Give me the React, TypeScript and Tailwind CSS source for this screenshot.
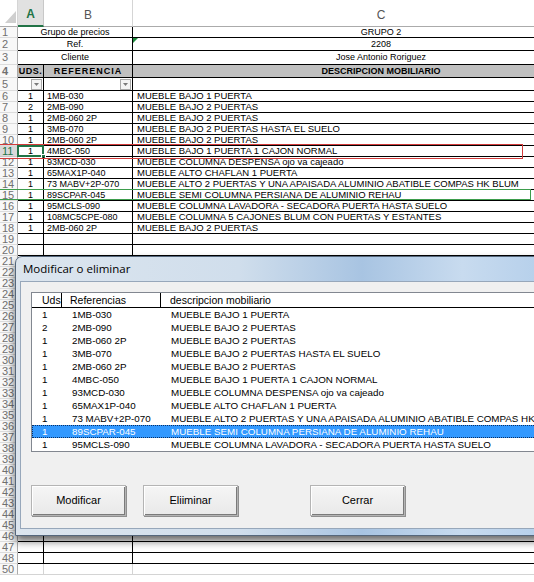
import clsx from "clsx";
import type { ReactNode } from "react";

const sheetRows: [string, string, string][] = [
  ["1", "1MB-030", "MUEBLE BAJO 1 PUERTA"],
  ["2", "2MB-090", "MUEBLE BAJO 2 PUERTAS"],
  ["1", "2MB-060 2P", "MUEBLE BAJO 2 PUERTAS"],
  ["1", "3MB-070", "MUEBLE BAJO 2 PUERTAS HASTA EL SUELO"],
  ["1", "2MB-060 2P", "MUEBLE BAJO 2 PUERTAS"],
  ["1", "4MBC-050", "MUEBLE BAJO 1 PUERTA 1 CAJON NORMAL"],
  ["1", "93MCD-030", "MUEBLE COLUMNA DESPENSA ojo va cajeado"],
  ["1", "65MAX1P-040", "MUEBLE ALTO CHAFLAN 1 PUERTA"],
  ["1", "73 MABV+2P-070", "MUEBLE ALTO 2 PUERTAS Y UNA APAISADA ALUMINIO ABATIBLE COMPAS HK BLUM"],
  ["1", "89SCPAR-045", "MUEBLE SEMI COLUMNA PERSIANA DE ALUMINIO REHAU"],
  ["1", "95MCLS-090", "MUEBLE COLUMNA LAVADORA - SECADORA PUERTA HASTA SUELO"],
  ["1", "108MC5CPE-080", "MUEBLE COLUMNA 5 CAJONES BLUM CON PUERTAS Y ESTANTES"],
  ["1", "2MB-060 2P", "MUEBLE BAJO 2 PUERTAS"],
];

const listRows = sheetRows.slice(0, 11);

function RowHead({ n, active }: { n: number; active?: boolean }) {
  return (
    <div
      className={clsx(
        "flex w-[18px] shrink-0 items-center overflow-hidden border-r border-b pl-[2px] text-[11px] leading-none",
        active
          ? "border-r-[#217346] border-b-[#c6c6c6] bg-[#d9d9d9] text-[#217346]"
          : "border-r-[#ababab] border-b-[#dcdcdc] bg-[#f8f8f8] text-[#707070]"
      )}
    >
      {n}
    </div>
  );
}

type RowProps = {
  n: number;
  tall?: boolean;
  a?: ReactNode;
  b?: ReactNode;
  c?: ReactNode;
  plain?: boolean;
  lightBottom?: boolean;
  active?: boolean;
};

function SheetRow({ n, tall, a, b, c, plain, lightBottom, active }: RowProps) {
  const v = plain ? "border-r-[#d4d4d4]" : "border-r-black";
  const hb = plain || lightBottom ? "border-b-[#d4d4d4]" : "border-b-black";
  return (
    <div className={clsx("flex text-[9px] leading-none", tall ? "h-[13px]" : "h-[11px]")}>
      <RowHead n={n} active={active} />
      <div className={clsx("relative flex w-[26px] shrink-0 items-center justify-center border-r border-b", v, hb)}>
        {a}
        {active && (
          <>
            <div className="absolute -inset-[1px] border-2 border-[#217346]" />
            <div className="absolute -right-[3px] -bottom-[3px] h-[5px] w-[5px] border border-white bg-[#217346]" />
          </>
        )}
      </div>
      <div className={clsx("flex w-[89px] shrink-0 items-center whitespace-nowrap border-r border-b pl-[3px]", v, hb)}>
        {b}
      </div>
      <div className={clsx("flex w-[496px] shrink-0 items-center whitespace-nowrap border-b pl-[4px] text-[9.5px]", hb)}>
        {c}
      </div>
    </div>
  );
}

function FilterButton() {
  return (
    <div className="flex h-[11px] w-[11px] items-center justify-center border border-[#a9a9a9] bg-[#f4f4f4]">
      <svg width="5" height="3" viewBox="0 0 5 3">
        <polygon points="0,0 5,0 2.5,3" fill="#7a7a7a" />
      </svg>
    </div>
  );
}

function WinButton({ label }: { label: string }) {
  return (
    <button className="h-[31px] w-[95px] border border-[#b4b4b4] bg-[linear-gradient(#f5f5f5,#e9e9e9)] text-[11px] text-black shadow-[inset_1px_1px_#fff,inset_-1px_-1px_#7a7a7a,1px_1px_#8f8f8f]">
      {label}
    </button>
  );
}

export default function App() {
  const hidden = Array.from({ length: 28 }, (_, i) => 21 + i);
  return (
    <div className="relative h-[582px] w-[534px] overflow-hidden bg-white font-['Liberation_Sans',Arial,sans-serif] text-black">
      <div className="w-[640px]">
        {/* column letters */}
        <div className="flex h-[27px] text-[12px] leading-none text-[#555]">
          <div className="relative w-[18px] shrink-0 border-r border-b border-r-[#d5d5d5] border-b-[#ababab]">
            <svg className="absolute left-[5px] top-[11px]" width="11" height="12" viewBox="0 0 11 12">
              <polygon points="11,0 11,12 0,12" fill="#cfcfcf" />
            </svg>
          </div>
          <div className="flex w-[26px] shrink-0 items-center justify-center border-r border-b-2 border-r-[#c8c8c8] border-b-[#217346] bg-[#e1e1e1] pt-[2px] font-bold text-[#217346]">
            A
          </div>
          <div className="flex w-[89px] shrink-0 items-center justify-center border-r border-b border-r-[#d5d5d5] border-b-[#ababab] pt-[3px]">
            B
          </div>
          <div className="flex w-[496px] shrink-0 items-center justify-center border-b border-b-[#ababab] pt-[3px]">C</div>
        </div>

        {/* rows 1-3, merged A:B */}
        {[
          ["Grupo de precios", "GRUPO 2", "h-[11px]"],
          ["Ref.", "2208", "h-[13px]"],
          ["Cliente", "Jose Antonio Roriguez", "h-[14px]"],
        ].map(([label, value, h], i) => (
          <div key={label} className={clsx("flex text-[9px] leading-none", h)}>
            <RowHead n={i + 1} />
            <div className="flex w-[115px] shrink-0 items-center justify-center border-r border-b border-black">
              {label}
            </div>
            <div className="relative flex w-[496px] shrink-0 items-center justify-center border-b border-black">
              {i === 1 && (
                <div className="absolute left-0 top-0 h-0 w-0 border-t-[5px] border-r-[5px] border-t-[#1e8c3e] border-r-transparent" />
              )}
              {value}
            </div>
          </div>
        ))}

        {/* row 4 titles */}
        <div className="flex h-[13px] text-[9px] font-bold leading-none">
          <RowHead n={4} />
          <div className="flex w-[26px] shrink-0 items-center justify-center border-r border-b border-black bg-[#c0c0c0] tracking-[0.5px]">
            UDS.
          </div>
          <div className="flex w-[89px] shrink-0 items-center justify-center border-r border-b border-black bg-[#c0c0c0] tracking-[1px]">
            REFERENCIA
          </div>
          <div className="flex w-[496px] shrink-0 items-center justify-center border-b border-black bg-[#c0c0c0]">
            DESCRIPCION MOBILIARIO
          </div>
        </div>

        {/* row 5 filters */}
        <div className="flex h-[13px]">
          <RowHead n={5} />
          <div className="flex w-[26px] shrink-0 items-center justify-end border-r border-b border-black pr-[1px]">
            <FilterButton />
          </div>
          <div className="flex w-[89px] shrink-0 items-center justify-end border-r border-b border-black pr-[1px]">
            <FilterButton />
          </div>
          <div className="w-[496px] shrink-0 border-b border-black" />
        </div>

        {sheetRows.map(([a, b, c], i) => (
          <SheetRow key={i} n={i + 6} a={a} b={b} c={c} active={i + 6 === 11} />
        ))}
        <SheetRow n={19} />
        <SheetRow n={20} />
        {hidden.map((n) => (
          <SheetRow key={n} n={n} lightBottom={n === 49} />
        ))}
        <SheetRow n={50} plain />
      </div>

      {/* annotation boxes */}
      <div className="absolute left-[-2px] top-[144px] h-[15px] w-[525px] border border-[#d33b3b]" />
      <div className="absolute left-[-2px] top-[189px] h-[11px] w-[533px] border border-[#3d9d4c]" />

      {/* dialog window */}
      <div className="absolute left-[15px] top-[256px] flex h-[280px] w-[560px] flex-col rounded-t-[7px] border border-[#55677c] bg-[linear-gradient(90deg,#dce5ee_0%,#d0deec_40%,#a8c4e2_62%,#c8dbef_80%,#aecbe9_100%)] px-[4px] pb-[6px] shadow-[0_5px_8px_rgba(0,0,0,0.6)]">
        <div className="flex h-[24px] shrink-0 items-center pl-[3px] font-['Open_Sans',sans-serif] text-[11.5px] text-black">
          Modificar o eliminar
        </div>
        <div className="flex flex-1 flex-col border border-[#97a7ba] bg-[#f0f0f0]">
          {/* listbox */}
          <div className="ml-[10px] mt-[10px] h-[160px] w-[540px] border border-[#828790] bg-white text-[9.8px] leading-none">
            <div className="flex h-[15px] border-b border-black text-[10.5px]">
              <div className="flex w-[30px] items-center border-r border-black pl-[10px]">Uds</div>
              <div className="flex w-[99px] items-center border-r border-black pl-[8px]">Referencias</div>
              <div className="flex items-center pl-[9px]">descripcion mobiliario</div>
            </div>
            {listRows.map(([u, r, d], i) => (
              <div
                key={i}
                className={clsx(
                  "flex h-[13px] items-center whitespace-nowrap",
                  i === 9 && "bg-[#3399ff] text-white outline outline-1 outline-dotted -outline-offset-1 outline-[#0b2f63]"
                )}
              >
                <div className="w-[30px] pl-[10px]">{u}</div>
                <div className="w-[99px] pl-[10px]">{r}</div>
                <div className="pl-[10px]">{d}</div>
              </div>
            ))}
          </div>
          {/* buttons */}
          <div className="ml-[10px] mt-[33px] flex">
            <WinButton label="Modificar" />
            <div className="ml-[17px]">
              <WinButton label="Eliiminar" />
            </div>
            <div className="ml-[72px]">
              <WinButton label="Cerrar" />
            </div>
          </div>
        </div>
      </div>
    </div>
  );
}
